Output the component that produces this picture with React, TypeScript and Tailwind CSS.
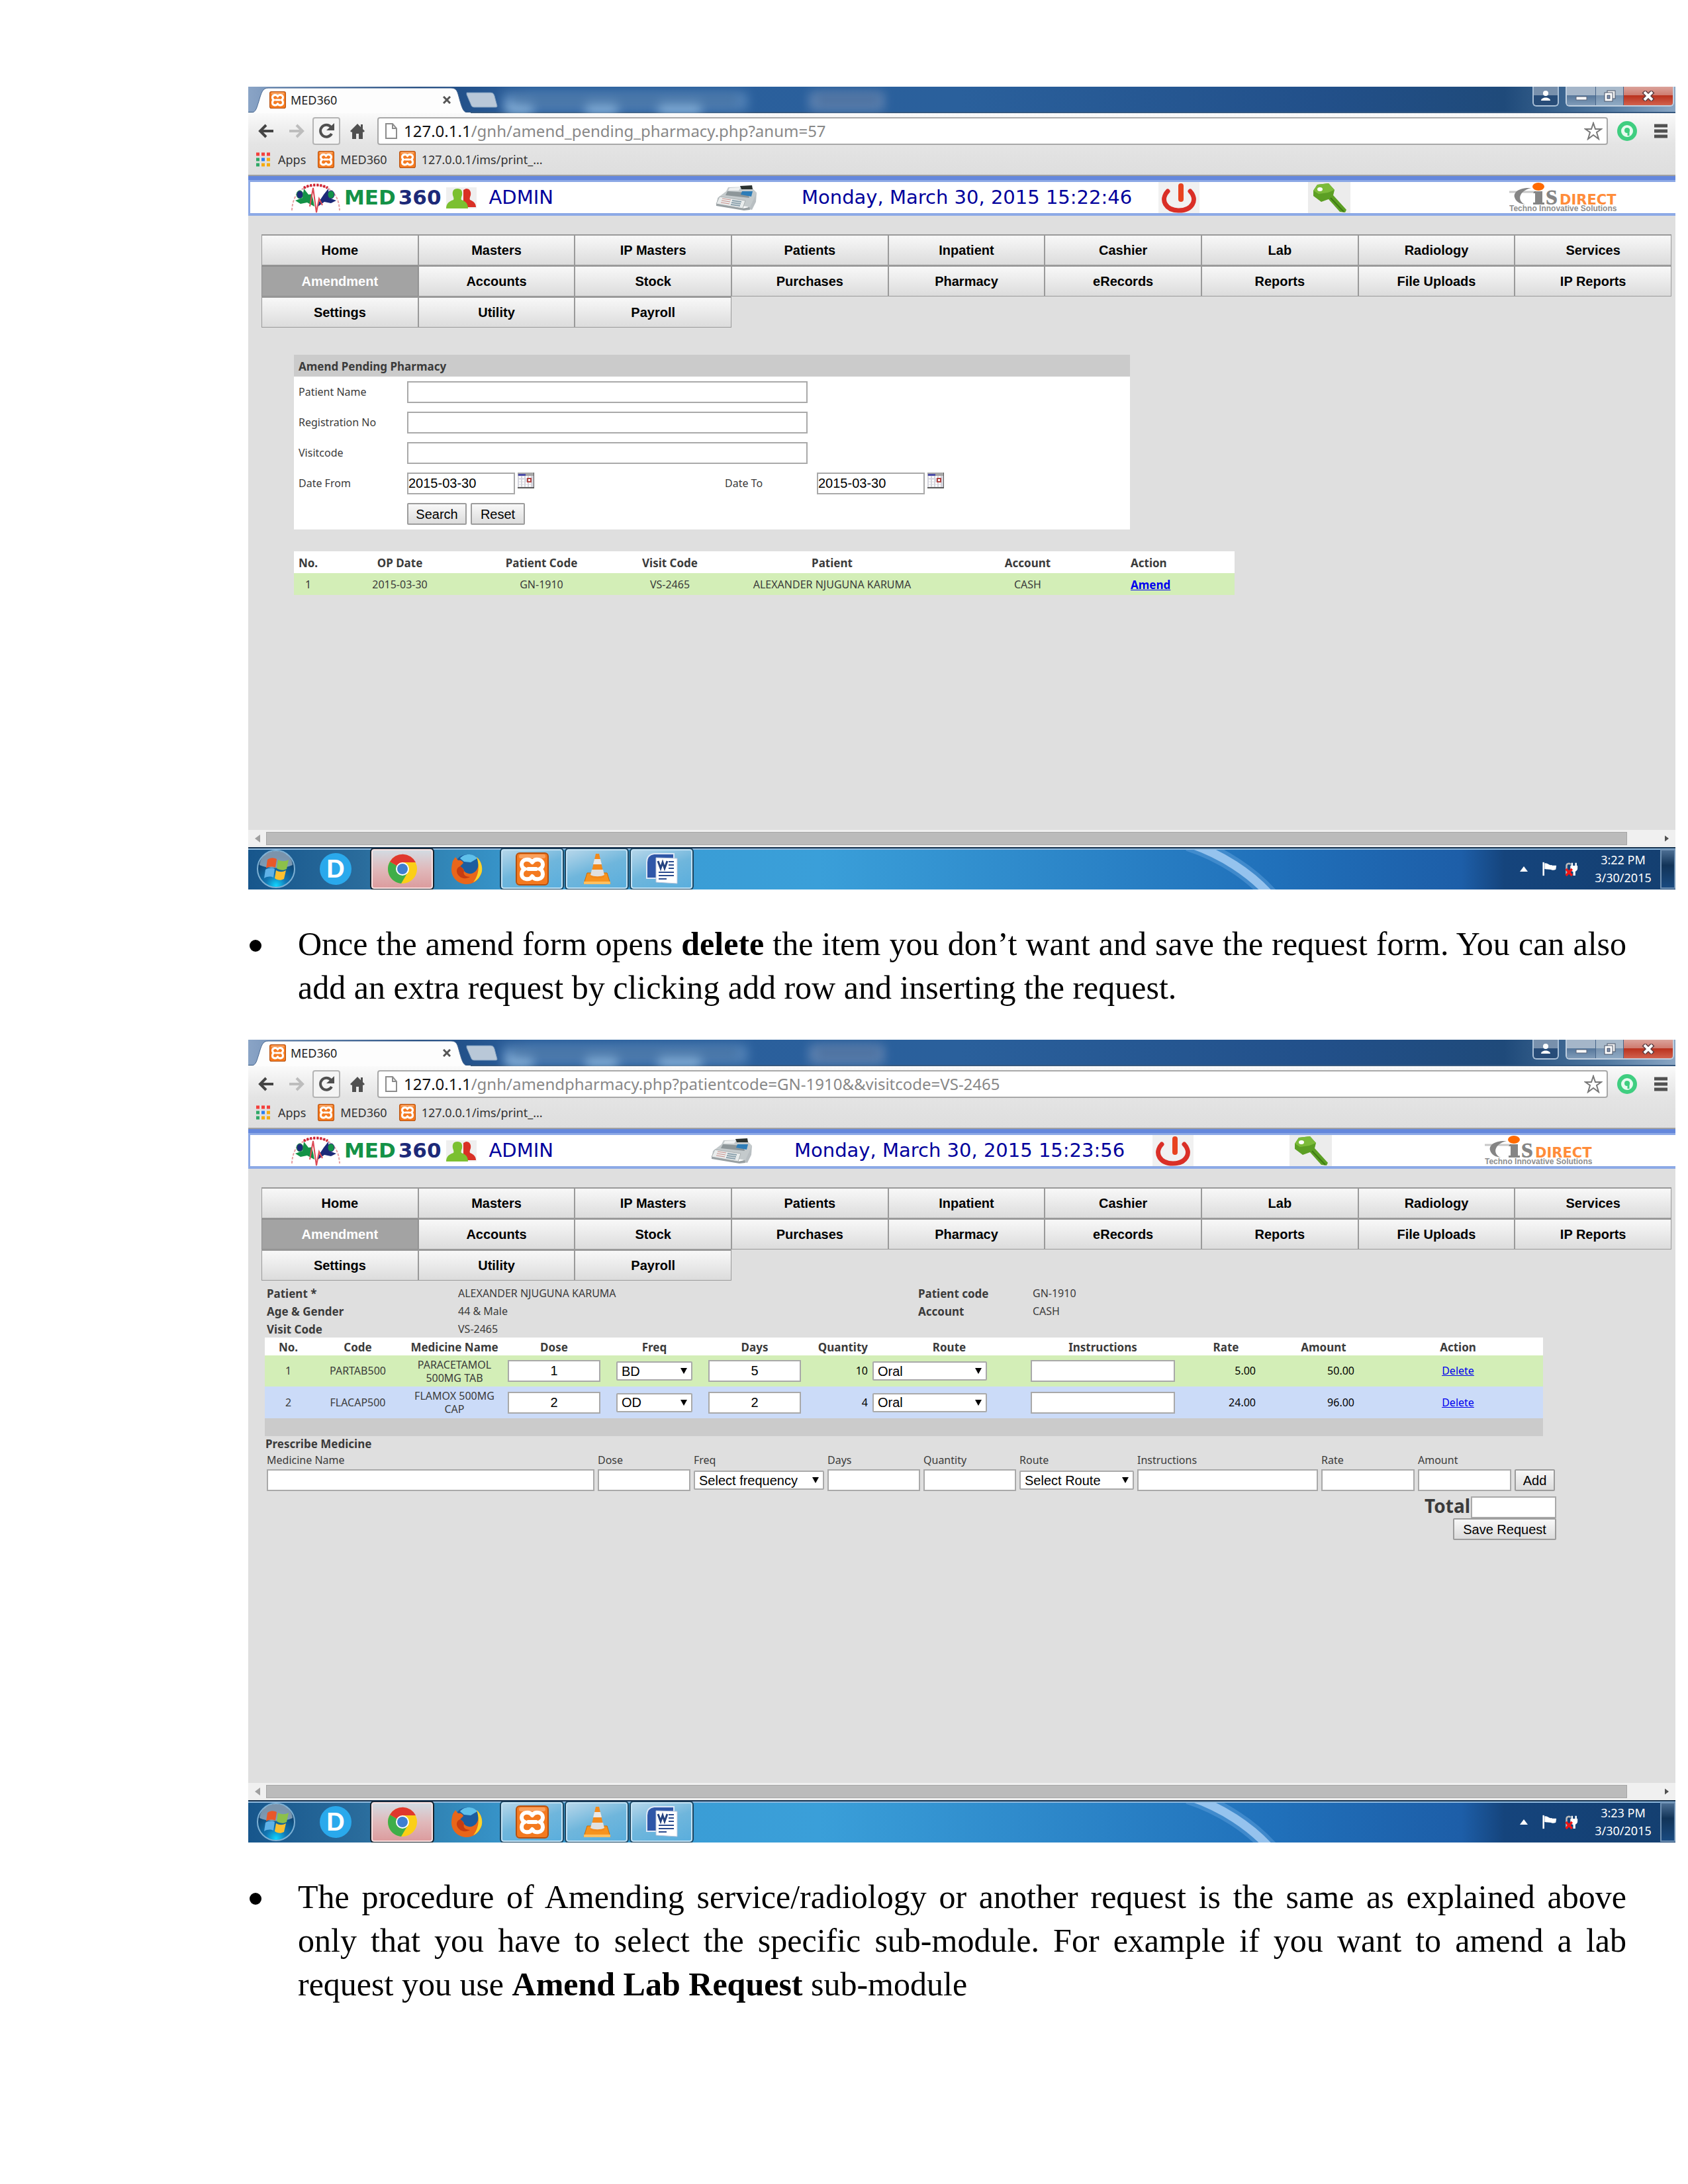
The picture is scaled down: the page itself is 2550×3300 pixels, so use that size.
import React from "react";

/* ---------- small drawings ---------- */

function XamppIcon({ className }: { className: string }) {
  return (
    <svg viewBox="0 0 50 50" className={className} preserveAspectRatio="none" aria-hidden="true">
      <rect x="1" y="1" width="48" height="48" rx="5" fill="#f47a20" stroke="#b4500f" strokeWidth="2" />
      <rect x="5" y="3" width="40" height="6" rx="3" fill="#f9b27a" opacity="0.7" />
      <path
        d="M25 15C21 8 9 10 9 18C9 22 11 24 14 25C11 26 9 28 9 33C9 41 21 43 25 36C29 43 41 41 41 33C41 28 39 26 36 25C39 24 41 22 41 18C41 10 29 8 25 15Z"
        fill="none"
        stroke="#fff"
        strokeWidth="6"
        strokeLinejoin="round"
      />
      <path d="M19 25H31" stroke="#fff" strokeWidth="6" strokeLinecap="round" />
    </svg>
  );
}

function Emblem() {
  return (
    <svg viewBox="0 0 74 46" className="h-[46px] w-[74px]" aria-hidden="true">
      <path d="M1 42C2 16 18 4 37 4S72 16 73 42" fill="none" stroke="#e8a0a4" strokeWidth="2" strokeDasharray="4 2" />
      <path d="M19 8C29 2 45 2 55 8" fill="none" stroke="#cf2030" strokeWidth="4" strokeDasharray="3 2" />
      <path d="M6 27L17 23L19 9L26 18L33 17L35 36L24 30L14 32Z" fill="#149247" />
      <path d="M68 27L57 23L56 9L49 18L43 27L39 37L50 29L60 31Z" fill="#1d2a78" />
      <path d="M30 12L37 44L44 12Z" fill="#fff" />
      <ellipse cx="13" cy="18" rx="5" ry="6" fill="#1d2a78" stroke="#149247" strokeWidth="1" />
      <ellipse cx="60" cy="18" rx="5" ry="6" fill="#149247" stroke="#1d2a78" strokeWidth="1" />
      <path d="M28 36L33 8L38 45L42 24L47 34" fill="none" stroke="#dc4a55" strokeWidth="2" />
    </svg>
  );
}

function UsersIcon() {
  return (
    <svg viewBox="0 0 46 32" className="h-8 w-[46px]" aria-hidden="true">
      <rect width="46" height="32" fill="#efefef" />
      <path d="M30 2C36 2 38 7 37 12C36 15 35 17 36 19C41 21 45 24 45 30H26V4Z" fill="#d93025" />
      <path d="M17 2C23 2 25 6 24 12C23 15 22 17 23 19C29 21 33 24 33 32H0C0 24 5 21 11 19C12 17 11 15 10 12C9 6 11 2 17 2Z" fill="#7bc030" />
    </svg>
  );
}

function RegisterIcon() {
  return (
    <svg viewBox="0 0 66 40" className="h-10 w-[66px]" aria-hidden="true">
      <path d="M52 14L63 12L62 26L56 38L50 37Z" fill="#b9bfc2" />
      <path d="M17 10L20 4L54 3L63 12L53 34L3 26L4 20Z" fill="#c4cacc" />
      <path d="M19 10L50 12L52 20L16 16Z" fill="#8d9699" />
      <path d="M22 5L39 4L36 9L20 9Z" fill="#eef0f0" />
      <path d="M38 2L56 1L57 7L40 7Z" fill="#2c3330" />
      <path d="M41 10L57 10L55 18L39 15Z" fill="#2d7db8" />
      <path d="M7 18L46 24L42 36L2 29Z" fill="#e9ecec" stroke="#aab0b2" />
      <path d="M11 21L24 23M10 24L23 26M9 27L22 29" stroke="#c98f8a" strokeWidth="1" />
      <path d="M26 24L40 26M25 27L39 29M24 30L38 32" stroke="#8aa0ac" strokeWidth="2" />
      <path d="M2 29L42 36L52 34L53 38L44 39L2 32Z" fill="#979fa2" />
    </svg>
  );
}

function PowerIcon() {
  return (
    <svg viewBox="0 0 62 47" className="h-[47px] w-[62px]" aria-hidden="true">
      <rect width="62" height="47" fill="#f1f1f1" />
      <path d="M14 14C2 27 11 43 31 43S60 27 48 14" fill="none" stroke="#da2f27" strokeWidth="7" strokeLinecap="round" />
      <path d="M34 6V26" stroke="#e8431f" strokeWidth="8" strokeLinecap="round" />
    </svg>
  );
}

function KeyIcon() {
  return (
    <svg viewBox="0 0 64 47" className="h-[47px] w-16" aria-hidden="true">
      <rect width="64" height="47" fill="#ececec" />
      <path d="M8 13L14 4L31 2L40 12L38 20L58 42L56 46L48 45L31 26L20 30L8 21Z" fill="#5c9f24" />
      <path d="M8 13L14 4L31 2L40 12L30 16L16 18Z" fill="#7cbb3a" />
      <path d="M34 24L54 45" stroke="#3f7a15" strokeWidth="2" />
      <ellipse cx="18" cy="11" rx="4" ry="3" fill="#fff" />
    </svg>
  );
}

function CisLogo() {
  return (
    <svg viewBox="0 0 180 47" className="h-[47px] w-[180px]" role="img" aria-label="CIS Direct">
      <path d="M0 15H40" stroke="#c8c8c8" strokeWidth="3" />
      <path d="M33 9C14 8 6 16 8 23C10 30 16 33 24 34C12 29 13 14 33 9Z" fill="#858585" />
      <path d="M38 14H50V31H53V34H36V31H39V17H36Z" fill="#858585" />
      <ellipse cx="44" cy="7" rx="9" ry="6" fill="#ff6a00" />
      <text x="55" y="34" fontFamily="Liberation Serif" fontWeight="700" fontSize="46" fill="#858585">s</text>
      <text x="76" y="34" fontFamily="DejaVu Sans" fontWeight="700" fontSize="21" fill="#ff8c3a">DIRECT</text>
      <text x="0" y="44" fontFamily="Liberation Sans" fontWeight="700" fontSize="12" fill="#8f8f8f">Techno Innovative Solutions</text>
    </svg>
  );
}

function CalendarIcon() {
  return (
    <svg viewBox="0 0 25 24" className="h-6 w-[25px]" aria-hidden="true">
      <rect width="25" height="24" fill="#5a5a5a" />
      <rect width="24" height="22" fill="#d4d4dc" />
      <rect width="24" height="5" fill="#a6a6a6" />
      <rect x="1" y="2" width="11" height="3" fill="#4b4ba8" />
      <path d="M2 7h3M7 7h3M12 7h3M17 7h3M2 12h3M7 12h3M2 16h3M7 16h3M12 16h3M17 16h3M2 20h3M7 20h3M12 20h3M17 20h3" stroke="#fff" strokeWidth="3" />
      <rect x="15" y="9" width="5" height="5" fill="#fff" stroke="#b04444" strokeWidth="2" />
    </svg>
  );
}

function StartOrb() {
  return (
    <svg viewBox="0 0 60 60" className="h-[60px] w-[60px]" aria-hidden="true">
      <defs>
        <radialGradient id="orb" cx="50%" cy="95%" r="80%">
          <stop offset="0" stopColor="#12d6ff" />
          <stop offset="0.35" stopColor="#1277b4" />
          <stop offset="1" stopColor="#0d3a66" />
        </radialGradient>
      </defs>
      <circle cx="30" cy="30" r="28" fill="url(#orb)" stroke="#7db0d4" strokeWidth="2" />
      <path d="M5 24C8 -4 52 -4 55 24C42 30 18 30 5 24Z" fill="#c4d0da" opacity="0.6" />
      <path d="M17 16C22 12 27 13 31 15L29 28C24 26 20 26 15 29Z" fill="#e8582a" />
      <path d="M33 16C38 19 44 19 49 16L46 30C41 33 36 32 31 29Z" fill="#8cc04a" />
      <path d="M14 31C19 28 24 28 28 30L26 43C22 41 17 41 12 44Z" fill="#5fb2e8" />
      <path d="M30 32C35 35 40 35 45 32L42 45C37 48 32 47 28 44Z" fill="#fcc030" />
    </svg>
  );
}

function DIcon() {
  return (
    <span className="flex h-12 w-12 items-center justify-center rounded-full bg-[#2aa9ec] text-[38px] leading-none font-bold text-white">
      D
    </span>
  );
}

function ChromeIcon() {
  return (
    <svg viewBox="0 0 46 46" className="h-[46px] w-[46px]" aria-hidden="true">
      <circle cx="23" cy="23" r="22" fill="#fbcf17" />
      <path d="M23 23L4 12A22 22 0 0 0 21 45L31 28Z" fill="#3fae49" />
      <path d="M23 23L4 12A22 22 0 0 1 43 13H23Z" fill="#e0382e" />
      <circle cx="23" cy="23" r="10" fill="#fff" />
      <circle cx="23" cy="23" r="8" fill="#3f7fcf" />
    </svg>
  );
}

function FirefoxIcon() {
  return (
    <svg viewBox="0 0 48 48" className="h-12 w-12" aria-hidden="true">
      <circle cx="25" cy="22" r="20" fill="#1c5d9f" />
      <path d="M14 8C20 0 34 0 40 8L30 14L20 13Z" fill="#5fc0ea" />
      <path d="M3 12L7 6L11 11C15 10 18 12 19 15L14 20C18 22 20 25 20 27C24 32 32 33 38 27C43 21 43 12 39 6C46 12 49 22 46 31C42 42 33 47 24 47C11 47 1 37 1 25C1 20 2 16 3 12Z" fill="#e9661a" />
      <path d="M39 6C48 14 49 26 45 33C42 39 38 42 34 44C42 34 44 20 39 6Z" fill="#fbd42a" />
      <path d="M14 20C8 22 7 30 13 35C17 39 24 39 29 36C22 36 18 32 20 27C19 24 17 22 14 20Z" fill="#c63d12" />
    </svg>
  );
}

function VlcIcon() {
  return (
    <svg viewBox="0 0 42 48" className="h-12 w-[42px]" aria-hidden="true">
      <path d="M6 30H36L41 46H1Z" fill="#f7931e" stroke="#d06c00" />
      <path d="M1 43H41V47H1Z" fill="#ffc060" />
      <path d="M19 1H24L32 36C28 39 15 39 11 36Z" fill="#f28a1c" />
      <path d="M17 9H26L28 17H15Z" fill="#e8e8e8" />
      <path d="M13 25H30L32 33C27 36 16 36 11 33Z" fill="#e0e0e0" />
    </svg>
  );
}

function WordIcon() {
  return (
    <svg viewBox="0 0 48 48" className="h-12 w-12" aria-hidden="true">
      <path d="M1 38V14C1 6 5 2 12 1H42V38Z" fill="#2f57a8" stroke="#dbe6f5" strokeWidth="2" />
      <path d="M15 7L47 8V46L15 44Z" fill="#fff" stroke="#b7c4da" />
      <path d="M18 12L22 23L25 14L28 23L32 12" fill="none" stroke="#24427f" strokeWidth="3" />
      <path d="M34 13h8M34 18h8M34 23h8M19 29h23M19 34h23M19 39h12" stroke="#2b4b8e" strokeWidth="2" />
    </svg>
  );
}

/* ---------- browser chrome ---------- */

function TitleBar() {
  return (
    <div className="relative flex h-10 items-start justify-between overflow-hidden bg-[linear-gradient(90deg,#8aa4c6_0%,#1f4a80_12%,#2b5f9c_20%,#2a609c_50%,#22508a_75%,#1f4a7a_88%,#4f779f_95%,#8aa6c4_100%)]">
      <div aria-hidden="true" className="absolute inset-x-0 bottom-0 h-0.5 bg-[#35587f]" />
      <div aria-hidden="true" className="absolute top-2 left-96 h-7 w-[370px] rounded bg-[#6f9bca] opacity-60 blur-sm" />
      <div aria-hidden="true" className="absolute top-6 left-[390px] h-4 w-10 bg-[#a5cdf0] opacity-80 blur-sm" />
      <div aria-hidden="true" className="absolute top-6 left-[510px] h-4 w-12 bg-[#a5cdf0] opacity-80 blur-sm" />
      <div aria-hidden="true" className="absolute top-6 left-[620px] h-4 w-16 bg-[#a5cdf0] opacity-80 blur-sm" />
      <div aria-hidden="true" className="absolute top-3 left-[400px] h-4 w-[340px] bg-[#3f6a98] opacity-60 blur-sm" />
      <div aria-hidden="true" className="absolute top-2 left-[848px] h-7 w-28 bg-[#6f8fba] opacity-80 blur-sm" />
      <div aria-hidden="true" className="absolute top-3 left-[858px] h-4 w-24 bg-[#466a98] opacity-80 blur-sm" />
      <div className="relative flex h-10 w-[336px] items-center">
        <svg viewBox="0 0 336 40" className="absolute inset-0 h-10 w-[336px]" aria-hidden="true">
          <path d="M0 40C12 40 12 34 16 22C20 8 22 2 30 2H306C316 2 316 8 320 22C324 36 326 40 336 40Z" fill="#fdfdfd" stroke="#4a6a94" />
          <path d="M0 39.5H336" stroke="#fdfdfd" strokeWidth="1" />
        </svg>
        <div className="relative flex w-full items-center pr-[22px] pl-8">
          <XamppIcon className="h-[26px] w-[25px]" />
          <span className="ml-[7px] grow font-['Noto_Sans',sans-serif] text-[18px] leading-6 text-[#222]">MED360</span>
          <button type="button" aria-label="Close tab" className="flex h-5 w-5 items-center">
            <svg viewBox="0 0 12 12" className="h-3 w-3" aria-hidden="true">
              <path d="M1 1L11 11M11 1L1 11" stroke="#555" strokeWidth="3" />
            </svg>
          </button>
        </div>
      </div>
      <button type="button" aria-label="New tab" className="relative mt-2 mr-auto -ml-2">
        <svg viewBox="0 0 50 24" className="h-6 w-[50px]" aria-hidden="true">
          <path d="M2 1H38C42 1 43 3 44 6L48 21C48 23 47 23 45 23H14C10 23 9 21 8 18L2 4Z" fill="#b9c8d8" stroke="#7d9cbd" />
        </svg>
      </button>
      <div className="relative mr-0.5 flex h-[30px] gap-2.5">
        <button type="button" aria-label="Profile" className="flex w-10 items-center justify-center rounded-b-md border-2 border-t-0 border-[#a9bfd6] bg-[linear-gradient(#7890ac_0%,#7890ac_45%,#274c78_46%,#274c78_100%)]">
          <svg viewBox="0 0 16 16" className="h-4 w-4" aria-hidden="true">
            <circle cx="8" cy="4" r="4" fill="#fff" />
            <path d="M1 15C1 9 15 9 15 15Z" fill="#fff" />
          </svg>
        </button>
        <div className="flex overflow-hidden rounded-b-md border-2 border-t-0 border-[#c0cfdf]">
          <button type="button" aria-label="Minimize" className="flex w-11 items-center justify-center border-r border-[#47658a] bg-[linear-gradient(#a5b6c9_0%,#a5b6c9_45%,#56769a_46%,#7f9bb8_100%)]">
            <svg viewBox="0 0 20 16" className="h-4 w-5" aria-hidden="true">
              <rect x="2" y="9" width="16" height="5" fill="#fff" stroke="#5a6478" />
            </svg>
          </button>
          <button type="button" aria-label="Restore" className="flex w-[42px] items-center justify-center border-r border-[#47658a] bg-[linear-gradient(#a9bacb_0%,#a9bacb_45%,#7590ad_46%,#8faac4_100%)]">
            <svg viewBox="0 0 18 18" className="h-[18px] w-[18px]" aria-hidden="true">
              <rect x="5" y="1" width="12" height="12" fill="#eee" stroke="#4a5468" />
              <rect x="1" y="4" width="12" height="13" fill="#fff" stroke="#4a5468" />
              <rect x="5" y="8" width="4" height="5" fill="#7d8fae" stroke="#4a5468" />
            </svg>
          </button>
          <button type="button" aria-label="Close" className="flex w-[74px] items-center justify-center bg-[linear-gradient(#dba39b_0%,#cf7c70_45%,#b9301c_46%,#d1614d_100%)]">
            <svg viewBox="0 0 20 16" className="h-4 w-5" aria-hidden="true">
              <path d="M3 1L17 15M17 1L3 15" stroke="#5a3b40" strokeWidth="7" />
              <path d="M4 2L16 14M16 2L4 14" stroke="#fff" strokeWidth="4" />
            </svg>
          </button>
        </div>
      </div>
    </div>
  );
}

function Toolbar({ host, path }: { host: string; path: string }) {
  return (
    <div className="border-b-2 border-[#a0a0a0] bg-[linear-gradient(#fafafa,#e4e4e4_50%,#dedede)] font-['Noto_Sans',sans-serif]">
      <div className="flex h-[54px] items-center pt-1.5 pr-3 pb-1.5 pl-[15px]">
        <button type="button" aria-label="Back" className="mr-[22px]">
          <svg viewBox="0 0 24 22" className="h-[22px] w-6" aria-hidden="true">
            <path d="M12 2L3 11L12 20M4 11H23" fill="none" stroke="#444" strokeWidth="4" />
          </svg>
        </button>
        <button type="button" aria-label="Forward" className="mr-3">
          <svg viewBox="0 0 24 22" className="h-[22px] w-6" aria-hidden="true">
            <path d="M12 2L21 11L12 20M20 11H1" fill="none" stroke="#bdbdbd" strokeWidth="4" />
          </svg>
        </button>
        <button type="button" aria-label="Reload" className="mr-3.5 flex h-[42px] w-[42px] items-center justify-center rounded border-2 border-[#b4b4b4] bg-[#f4f4f4]">
          <svg viewBox="0 0 26 26" className="h-[26px] w-[26px]" aria-hidden="true">
            <path d="M20 7A9 9 0 1 0 21 17" fill="none" stroke="#505050" strokeWidth="4" />
            <path d="M25 1V12H13Z" fill="#505050" />
          </svg>
        </button>
        <button type="button" aria-label="Home" className="mr-[18px]">
          <svg viewBox="0 0 24 24" className="h-6 w-6" aria-hidden="true">
            <path d="M12 1L1 12L3 14L4 13V24H10V16H14V24H20V13L21 14L23 12L20 9V2H17V6Z" fill="#505050" />
          </svg>
        </button>
        <div className="flex h-[42px] grow items-center rounded border-2 border-[#a8a8a8] bg-white pr-1.5 pl-2.5">
          <svg viewBox="0 0 18 24" className="mr-2.5 h-6 w-[18px]" aria-hidden="true">
            <path d="M1 1H11L17 8V23H1ZM11 1V8H17" fill="#fff" stroke="#8c8c8c" strokeWidth="2" />
          </svg>
          <span className="grow text-[24px] leading-8 whitespace-nowrap text-[#888]">
            <span className="text-[#111]">{host}</span>
            {path}
          </span>
          <button type="button" aria-label="Bookmark this page">
            <svg viewBox="0 0 28 28" className="h-7 w-7" aria-hidden="true">
              <path d="M14 2L17 11H26L19 16L22 26L14 20L6 26L9 16L2 11H11Z" fill="#fff" stroke="#777" strokeWidth="2" />
            </svg>
          </button>
        </div>
        <button type="button" aria-label="Extension" className="ml-3.5">
          <svg viewBox="0 0 30 30" className="h-[30px] w-[30px]" aria-hidden="true">
            <circle cx="15" cy="15" r="12" fill="#e8fbf0" stroke="#3fce80" strokeWidth="6" />
            <circle cx="15" cy="14" r="4" fill="#3fce80" />
            <path d="M17 12V22" stroke="#3fce80" strokeWidth="3" />
          </svg>
        </button>
        <button type="button" aria-label="Menu" className="ml-[26px]">
          <svg viewBox="0 0 20 22" className="h-[22px] w-5" aria-hidden="true">
            <path d="M0 3H20M0 11H20M0 19H20" stroke="#505050" strokeWidth="5" />
          </svg>
        </button>
      </div>
      <nav aria-label="Bookmarks" className="flex h-[39px] items-center pb-2 pl-3 text-[18px] leading-6 text-[#333]">
        <a href="#apps" className="flex items-center">
          <svg viewBox="0 0 22 22" className="mr-[11px] h-[22px] w-[22px]" aria-hidden="true">
            <path d="M0 3H5M8 3H13M16 3H21" stroke="#f4403c" strokeWidth="5" />
            <path d="M0 11H5" stroke="#2fa866" strokeWidth="5" />
            <path d="M8 11H13" stroke="#2a7ff0" strokeWidth="5" />
            <path d="M16 11H21M8 19H13M16 19H21" stroke="#f5ab10" strokeWidth="5" />
            <path d="M0 19H5" stroke="#2fa866" strokeWidth="5" />
          </svg>
          Apps
        </a>
        <a href="#med360" className="ml-[18px] flex items-center">
          <XamppIcon className="mr-[9px] h-[26px] w-[25px]" />
          MED360
        </a>
        <a href="#print" className="ml-[18px] flex items-center">
          <XamppIcon className="mr-[9px] h-[26px] w-[25px]" />
          127.0.0.1/ims/print_...
        </a>
      </nav>
    </div>
  );
}

type HeaderGaps = { register: string; date: string; power: string; key: string; logo: string };

function AppHeader({ date, gaps }: { date: string; gaps: HeaderGaps }) {
  return (
    <header className="border-t-[6px] border-[#6487dc]">
      <div className="flex items-center border-t-[3px] border-b-4 border-l-[3px] border-[#8ca9e6] bg-white font-['DejaVu_Sans',sans-serif] text-[29px] leading-[47px] text-[#00009c]">
        <div className="flex w-[644px] items-center pl-[62px]">
          <Emblem />
          <span className="ml-1.5 text-[31px] font-bold text-[#149247]">MED</span>
          <span className="ml-1 text-[31px] font-bold text-[#1d2a78]">360</span>
          <span className="ml-2">
            <UsersIcon />
          </span>
          <span className="ml-[18px]">ADMIN</span>
        </div>
        <span className={gaps.register}>
          <RegisterIcon />
        </span>
        <span className={gaps.date}>{date}</span>
        <button type="button" aria-label="Log out" className={gaps.power}>
          <PowerIcon />
        </button>
        <button type="button" aria-label="Change password" className={gaps.key}>
          <KeyIcon />
        </button>
        <span className={gaps.logo}>
          <CisLogo />
        </span>
      </div>
    </header>
  );
}

const MENU = [
  "Home", "Masters", "IP Masters", "Patients", "Inpatient", "Cashier", "Lab", "Radiology", "Services",
  "Amendment", "Accounts", "Stock", "Purchases", "Pharmacy", "eRecords", "Reports", "File Uploads", "IP Reports",
  "Settings", "Utility", "Payroll",
];

function MainMenu() {
  return (
    <nav aria-label="Modules" className="mr-1.5 ml-5 grid grid-cols-9 text-center text-[20px] leading-[44px] font-bold">
      {MENU.map((name) => (
        <a
          key={name}
          href="#module"
          className={
            name === "Amendment"
              ? "border-x border-t-2 border-b border-[#8f8f8f] bg-[#a3a3a3] text-white"
              : "border-x border-t-2 border-b border-[#9a9a9a] bg-[linear-gradient(#f8f8f8,#dcdcdc)] text-black"
          }
        >
          {name}
        </a>
      ))}
    </nav>
  );
}

function ScrollBar() {
  return (
    <div className="flex h-[26px] items-center bg-[#f0f0f0] px-2.5">
      <svg viewBox="0 0 8 12" className="h-3 w-2" aria-hidden="true">
        <path d="M8 0V12L0 6Z" fill="#a0a0a0" />
      </svg>
      <div className="mr-[57px] ml-[9px] h-5 grow border border-[#a6a6a6] bg-[#bbb]" />
      <svg viewBox="0 0 8 12" className="h-3 w-1.5" aria-hidden="true">
        <path d="M0 0V12L8 6Z" fill="#505050" />
      </svg>
    </div>
  );
}

const TASK =
  "flex h-[60px] w-[93px] items-center justify-center rounded border-2 border-[#c4e2f4] bg-[linear-gradient(160deg,#b5d6ea,#6fb6dc_50%,#5aaedd)] outline-2 outline-[#1c4560]";

function Taskbar({ time }: { time: string }) {
  return (
    <div className="relative flex h-16 items-center overflow-hidden border-t-2 border-[#14304d] bg-[linear-gradient(90deg,#17568c_0%,#2a6c9c_8%,#2f80b0_12%,#3a9bd2_20%,#3a9fd9_40%,#2a82c6_60%,#2070ba_72%,#1d5ea8_85%,#15447c_88%,#143f70_100%)]">
      <svg viewBox="0 0 260 64" className="absolute top-0 left-[1380px] h-16 w-[260px]" aria-hidden="true">
        <path d="M40 -8C90 8 135 38 165 72" fill="none" stroke="#5ea0dc" strokeWidth="24" opacity="0.5" />
        <path d="M40 -8C90 8 135 38 165 72" fill="none" stroke="#a5cdf3" strokeWidth="13" opacity="0.85" />
      </svg>
      <div aria-hidden="true" className="absolute inset-x-0 top-0 h-0.5 bg-[#8fb9dd]" />
      <div className="relative flex grow items-center pl-3">
        <button type="button" aria-label="Start">
          <StartOrb />
        </button>
        <button type="button" aria-label="D" className="ml-9">
          <DIcon />
        </button>
        <button type="button" aria-label="Chrome" className="ml-[30px] flex h-[60px] w-[93px] items-center justify-center rounded border-2 border-[#fbe3e3] bg-[linear-gradient(#d3dbe2,#e0b9bb_50%,#dc9c9e)] outline-2 outline-[#16222c]">
          <ChromeIcon />
        </button>
        <button type="button" aria-label="Firefox" className="ml-[27px]">
          <FirefoxIcon />
        </button>
        <button type="button" aria-label="XAMPP" className={`ml-7 ${TASK}`}>
          <XamppIcon className="h-[50px] w-[50px]" />
        </button>
        <button type="button" aria-label="VLC" className={`ml-[5px] ${TASK}`}>
          <VlcIcon />
        </button>
        <button type="button" aria-label="Word" className={`ml-[5px] ${TASK}`}>
          <WordIcon />
        </button>
      </div>
      <div className="relative flex h-full items-center">
        <svg viewBox="0 0 12 8" className="mr-[22px] h-2 w-3" aria-hidden="true">
          <path d="M6 0L12 8H0Z" fill="#fff" />
        </svg>
        <svg viewBox="0 0 26 24" className="mr-3 h-6 w-[22px]" aria-hidden="true">
          <path d="M2 0V24" stroke="#fff" strokeWidth="3" />
          <path d="M4 2C9 0 12 6 16 5C20 7 22 5 25 6L24 13C18 16 15 12 13 13C9 12 7 13 4 12Z" fill="#fff" />
        </svg>
        <svg viewBox="0 0 24 24" className="mr-6 h-6 w-5" aria-hidden="true">
          <path d="M3 22V6C3 2 9 1 10 4" fill="none" stroke="#bbb" strokeWidth="3" />
          <path d="M10 6H23V11C23 15 19 16 19 17V24H15V17C12 16 10 14 10 11Z" fill="#fff" />
          <path d="M13 1V6M20 1V6" stroke="#fff" strokeWidth="3" />
          <path d="M2 12L13 24M13 12L2 24" stroke="#f01414" strokeWidth="4" />
        </svg>
        <div className="mr-3 w-[88px] text-center font-['Noto_Sans',sans-serif] text-[18px] leading-[27px] text-white">
          <div>{time}</div>
          <div>3/30/2015</div>
        </div>
        <div className="h-[60px] w-[23px] border-2 border-[#6f90b2] bg-[linear-gradient(#4b6d92,#123458_40%,#1a4a80)]" />
      </div>
    </div>
  );
}

function BrowserWindow(props: {
  path: string;
  date: string;
  time: string;
  gaps: HeaderGaps;
  children: React.ReactNode;
}) {
  return (
    <section className="bg-[#dfdfdf] font-['Liberation_Sans',sans-serif]">
      <TitleBar />
      <Toolbar host="127.0.1.1" path={props.path} />
      <AppHeader date={props.date} gaps={props.gaps} />
      <main className="min-h-[928px] pt-7">
        <MainMenu />
        {props.children}
      </main>
      <ScrollBar />
      <Taskbar time={props.time} />
    </section>
  );
}

/* ---------- form parts ---------- */

const FIELD = "h-[33px] border-2 border-[#a9a9a9] bg-white text-[20px] text-black";
const BUTTON =
  "h-[33px] rounded-xs border-2 border-[#9c9c9c] bg-[linear-gradient(#f8f8f8,#dcdcdc)] text-[20px] leading-7 text-black";

function Dropdown({ label, value, className }: { label: string; value: string; className: string }) {
  return (
    <span className={`relative block text-left ${className}`}>
      <select
        aria-label={label}
        defaultValue={value}
        className="block h-[29px] w-full appearance-none rounded-xs border-2 border-[#a9a9a9] bg-white pl-1.5 font-['Liberation_Sans',sans-serif] text-[20px] leading-6 text-black"
      >
        <option>{value}</option>
      </select>
      <svg viewBox="0 0 10 9" className="pointer-events-none absolute top-2.5 right-2 h-[9px] w-2.5" aria-hidden="true">
        <path d="M0 0H10L5 9Z" fill="#000" />
      </svg>
    </span>
  );
}

function PendingPharmacy() {
  return (
    <div className="mt-[41px] ml-[69px] font-['Noto_Sans',sans-serif] text-[16px] leading-[33px] text-[#3b3b3b]">
      <form className="w-[1263px] bg-white">
        <h2 className="bg-[#cbcbcb] pt-0.5 pl-[7px] text-[17px] leading-[31px] font-bold">Amend Pending Pharmacy</h2>
        <div className="flex flex-col gap-[13px] py-[7px] pl-[7px]">
          {["Patient Name", "Registration No", "Visitcode"].map((name) => (
            <div key={name} className="flex">
              <label htmlFor={name} className="w-[164px]">{name}</label>
              <input id={name} type="text" className={`w-[605px] ${FIELD}`} />
            </div>
          ))}
          <div className="flex">
            <label htmlFor="from" className="w-[164px]">Date From</label>
            <input id="from" type="text" defaultValue="2015-03-30" className={`w-[163px] font-['Liberation_Sans',sans-serif] ${FIELD}`} />
            <button type="button" aria-label="Pick start date" className="mr-72 ml-1 self-start">
              <CalendarIcon />
            </button>
            <label htmlFor="to" className="w-[139px]">Date To</label>
            <input id="to" type="text" defaultValue="2015-03-30" className={`w-[163px] font-['Liberation_Sans',sans-serif] ${FIELD}`} />
            <button type="button" aria-label="Pick end date" className="ml-1 self-start">
              <CalendarIcon />
            </button>
          </div>
          <div className="flex gap-1.5 pl-[164px] font-['Liberation_Sans',sans-serif]">
            <button type="button" className={`w-[90px] ${BUTTON}`}>Search</button>
            <button type="reset" className={`w-[82px] ${BUTTON}`}>Reset</button>
          </div>
        </div>
      </form>
      <table className="mt-[33px] w-[1421px] table-fixed text-center leading-[31px] [&_td]:pt-0.5 [&_th]:pt-0.5">
        <colgroup>
          <col className="w-[43px]" />
          <col className="w-[234px]" />
          <col className="w-[194px]" />
          <col className="w-[194px]" />
          <col className="w-[296px]" />
          <col className="w-[295px]" />
          <col />
        </colgroup>
        <thead className="bg-white text-[17px]">
          <tr>
            {["No.", "OP Date", "Patient Code", "Visit Code", "Patient", "Account"].map((h) => (
              <th key={h}>{h}</th>
            ))}
            <th className="pl-2 text-left">Action</th>
          </tr>
        </thead>
        <tbody className="bg-[#d3eeb7]">
          <tr>
            {["1", "2015-03-30", "GN-1910", "VS-2465", "ALEXANDER NJUGUNA KARUMA", "CASH"].map((v) => (
              <td key={v} className="whitespace-nowrap">{v}</td>
            ))}
            <td className="pl-2 text-left text-[17px] font-bold text-[#0000ee]">
              <a href="#amend" className="underline">Amend</a>
            </td>
          </tr>
        </tbody>
      </table>
    </div>
  );
}

const ITEMS = [
  { no: "1", code: "PARTAB500", name: "PARACETAMOL 500MG TAB", dose: "1", freq: "BD", days: "5", qty: "10", rate: "5.00", amount: "50.00", row: "h-[47px] bg-[#d3eeb7]" },
  { no: "2", code: "FLACAP500", name: "FLAMOX 500MG CAP", dose: "2", freq: "OD", days: "2", qty: "4", rate: "24.00", amount: "96.00", row: "h-12 bg-[#cbdbf8]" },
];

const NEW_FIELDS = [
  { label: "Medicine Name", width: "w-[495px]" },
  { label: "Dose", width: "w-[140px]" },
  { label: "Freq", width: "w-[197px]", select: "Select frequency" },
  { label: "Days", width: "w-[140px]" },
  { label: "Quantity", width: "w-[140px]" },
  { label: "Route", width: "w-[173px]", select: "Select Route" },
  { label: "Instructions", width: "w-[273px]" },
  { label: "Rate", width: "w-[141px]" },
  { label: "Amount", width: "w-[141px]" },
];

function AmendPharmacy() {
  return (
    <form className="mt-[5px] ml-[25px] font-['Noto_Sans',sans-serif] text-[16px] leading-[27px] text-[#3b3b3b]">
      <dl className="grid grid-cols-[289px_695px_173px_1fr] pl-[3px] leading-[25px] [&>dd]:pt-0.5 [&>dt]:pt-0.5 [&>dt]:text-[17px] [&>dt]:font-bold">
        <dt>Patient *</dt>
        <dd>ALEXANDER NJUGUNA KARUMA</dd>
        <dt>Patient code</dt>
        <dd>GN-1910</dd>
        <dt>Age &amp; Gender</dt>
        <dd>44 &amp; Male</dd>
        <dt>Account</dt>
        <dd>CASH</dd>
        <dt>Visit Code</dt>
        <dd>VS-2465</dd>
      </dl>
      <table className="w-[1931px] table-fixed text-center">
        <colgroup>
          <col className="w-[71px]" />
          <col className="w-[139px]" />
          <col className="w-[153px]" />
          <col className="w-[148px]" />
          <col className="w-[155px]" />
          <col className="w-[148px]" />
          <col className="w-[101px]" />
          <col className="w-[238px]" />
          <col className="w-[226px]" />
          <col className="w-[146px]" />
          <col className="w-[149px]" />
          <col />
        </colgroup>
        <thead className="bg-white text-[17px] leading-[25px] [&_th]:pt-0.5">
          <tr>
            {["No.", "Code", "Medicine Name", "Dose", "Freq", "Days", "Quantity", "Route", "Instructions", "Rate", "Amount", "Action"].map((h) => (
              <th key={h} className={h === "Quantity" ? "pr-1 text-right" : "whitespace-nowrap"}>{h}</th>
            ))}
          </tr>
        </thead>
        <tbody>
          {ITEMS.map((it) => (
            <tr key={it.no} className={it.row}>
              <td>{it.no}</td>
              <td>{it.code}</td>
              <td className="px-4 leading-5">{it.name}</td>
              <td>
                <input aria-label={`Dose ${it.no}`} defaultValue={it.dose} className={`w-[140px] text-center font-['Liberation_Sans',sans-serif] ${FIELD}`} />
              </td>
              <td>
                <Dropdown label={`Freq ${it.no}`} value={it.freq} className="mx-auto w-[115px]" />
              </td>
              <td>
                <input aria-label={`Days ${it.no}`} defaultValue={it.days} className={`w-[140px] text-center font-['Liberation_Sans',sans-serif] ${FIELD}`} />
              </td>
              <td className="pr-1 text-right text-black">{it.qty}</td>
              <td>
                <Dropdown label={`Route ${it.no}`} value="Oral" className="ml-[3px] w-[173px]" />
              </td>
              <td>
                <input aria-label={`Instructions ${it.no}`} className={`w-[218px] ${FIELD}`} />
              </td>
              <td className="pr-7 text-right text-black">{it.rate}</td>
              <td className="pr-7 text-right text-black">{it.amount}</td>
              <td>
                <a href="#delete" className="text-[#0000ee] underline">Delete</a>
              </td>
            </tr>
          ))}
        </tbody>
        <tfoot>
          <tr className="h-[27px] bg-[#cbcbcb]">
            <td colSpan={12} />
          </tr>
        </tfoot>
      </table>
      <h2 className="pl-px text-[17px] leading-[23px] font-bold">Prescribe Medicine</h2>
      <div className="flex gap-[5px] pl-[3px]">
        {NEW_FIELDS.map((f) => (
          <label key={f.label} className={`block ${f.width}`}>
            {f.label}
            {f.select ? (
              <Dropdown label={f.label} value={f.select} className="mt-0.5 w-full" />
            ) : (
              <input className={`block w-full ${FIELD}`} />
            )}
          </label>
        ))}
        <button type="button" className={`w-[61px] self-end font-['Liberation_Sans',sans-serif] ${BUTTON}`}>Add</button>
      </div>
      <div className="mt-2 flex w-[1951px] flex-col items-end">
        <label className="flex text-[28px] leading-7 font-bold">
          Total
          <input className={`ml-px w-[129px] ${FIELD}`} />
        </label>
        <button type="button" className={`w-[156px] font-['Liberation_Sans',sans-serif] ${BUTTON}`}>Save Request</button>
      </div>
    </form>
  );
}

/* ---------- manual page ---------- */

function Bullet({ className, children }: { className: string; children: React.ReactNode }) {
  return (
    <li className={`flex pr-[74px] ${className}`}>
      <span aria-hidden="true" className="mt-[27px] mr-[55px] ml-0.5 h-[18px] w-[18px] shrink-0 rounded-full bg-black" />
      <p className="grow text-justify">{children}</p>
    </li>
  );
}

export default function App() {
  return (
    <div className="min-h-screen bg-white pt-[131px] pr-[19px] pl-[375px]">
      <BrowserWindow
        path="/gnh/amend_pending_pharmacy.php?anum=57"
        date="Monday, March 30, 2015 15:22:46"
        time="3:22 PM"
        gaps={{ register: "ml-[58px]", date: "ml-[65px]", power: "ml-10", key: "ml-[164px]", logo: "ml-60" }}
      >
        <PendingPharmacy />
      </BrowserWindow>
      <ul className="font-['Liberation_Serif',serif] text-[50px] leading-[66px] text-black">
        <Bullet className="mt-[49px]">
          Once the amend form opens <b>delete</b> the item you don’t want and save the request form. You can also add
          an extra request by clicking add row and inserting the request.
        </Bullet>
      </ul>
      <div className="mt-[46px]">
        <BrowserWindow
          path="/gnh/amendpharmacy.php?patientcode=GN-1910&&visitcode=VS-2465"
          date="Monday, March 30, 2015 15:23:56"
          time="3:23 PM"
          gaps={{ register: "ml-[51px]", date: "ml-[61px]", power: "ml-[42px]", key: "ml-[145px]", logo: "ml-[231px]" }}
        >
          <AmendPharmacy />
        </BrowserWindow>
      </div>
      <ul className="font-['Liberation_Serif',serif] text-[50px] leading-[66px] text-black">
        <Bullet className="mt-[49px]">
          The procedure of Amending service/radiology or another request is the same as explained above only that you
          have to select the specific sub-module. For example if you want to amend a lab request you use{" "}
          <b>Amend Lab Request</b> sub-module
        </Bullet>
      </ul>
    </div>
  );
}
